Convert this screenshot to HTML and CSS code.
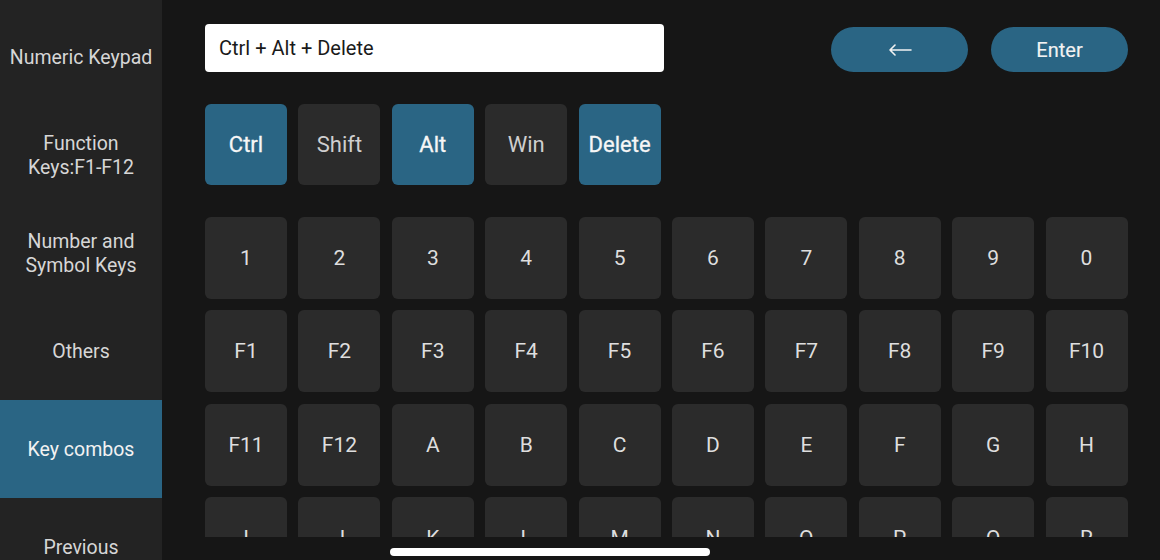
FILE: index.html
```html
<!DOCTYPE html>
<html>
<head>
<meta charset="utf-8">
<link rel="stylesheet" href="styles.css">
</head>
<body>
<div class="app">
  <nav class="sidebar">
    <div class="nav-item">Numeric Keypad</div>
    <div class="nav-item">Function<br>Keys:F1-F12</div>
    <div class="nav-item">Number and<br>Symbol Keys</div>
    <div class="nav-item">Others</div>
    <div class="nav-item active">Key combos</div>
    <div class="nav-item">Previous</div>
  </nav>
  <main class="main">
    <div class="topbar">
      <div class="input">Ctrl + Alt + Delete</div>
      <div class="actions">
        <button class="pill" aria-label="Backspace"><svg class="arrow" width="24" height="12" viewBox="0 0 24 12"><path d="M23 6H2M7 1L2 6l5 5" fill="none" stroke="#f2f2f2" stroke-width="1.6" stroke-linecap="round" stroke-linejoin="round"/></svg></button>
        <button class="pill">Enter</button>
      </div>
    </div>
    <div class="mods">
      <div class="key mod on">Ctrl</div>
      <div class="key mod">Shift</div>
      <div class="key mod on">Alt</div>
      <div class="key mod">Win</div>
      <div class="key mod on">Delete</div>
    </div>
    <div class="grid">
      <div class="key">1</div><div class="key">2</div><div class="key">3</div><div class="key">4</div><div class="key">5</div>
      <div class="key">6</div><div class="key">7</div><div class="key">8</div><div class="key">9</div><div class="key">0</div>
      <div class="key">F1</div><div class="key">F2</div><div class="key">F3</div><div class="key">F4</div><div class="key">F5</div>
      <div class="key">F6</div><div class="key">F7</div><div class="key">F8</div><div class="key">F9</div><div class="key">F10</div>
      <div class="key">F11</div><div class="key">F12</div><div class="key">A</div><div class="key">B</div><div class="key">C</div>
      <div class="key">D</div><div class="key">E</div><div class="key">F</div><div class="key">G</div><div class="key">H</div>
      <div class="key">I</div><div class="key">J</div><div class="key">K</div><div class="key">L</div><div class="key">M</div>
      <div class="key">N</div><div class="key">O</div><div class="key">P</div><div class="key">Q</div><div class="key">R</div>
    </div>
  </main>
  <div class="home-indicator"></div>
</div>
</body>
</html>
```
FILE: styles.css
```css
* { box-sizing: border-box; }
html, body {
  margin: 0;
  padding: 0;
  width: 1160px;
  height: 560px;
  overflow: hidden;
  background: #161616;
  font-family: Roboto, "Noto Sans", sans-serif;
}
.app {
  position: relative;
  display: flex;
  width: 1160px;
  height: 560px;
}
.sidebar {
  width: 162px;
  flex: none;
  background: #232323;
  padding-top: 8px;
  display: flex;
  flex-direction: column;
  overflow: hidden;
}
.nav-item {
  flex: none;
  height: 98px;
  display: flex;
  align-items: center;
  justify-content: center;
  text-align: center;
  color: #d6d6d6;
  font-size: 19.5px;
  line-height: 24px;
  padding-top: 2px;
}
.nav-item.active {
  background: #2a6584;
  color: #f2f2f2;
}
.main {
  flex: 1;
  padding: 24px 32px 0 43px;
  display: flex;
  flex-direction: column;
}
.topbar {
  display: flex;
  align-items: flex-start;
}
.input {
  width: 459px;
  height: 48px;
  background: #ffffff;
  border-radius: 4px;
  color: #1a1a1a;
  font-size: 20px;
  padding-left: 14px;
  display: flex;
  align-items: center;
}
.actions {
  margin-left: auto;
  margin-top: 3px;
  display: flex;
  gap: 23px;
}
.pill {
  width: 137px;
  height: 45px;
  border: none;
  border-radius: 23px;
  background: #2a6584;
  color: #f2f2f2;
  font-family: inherit;
  font-size: 20px;
  padding: 0;
  display: flex;
  align-items: center;
  justify-content: center;
  -webkit-text-stroke: 0.15px #f2f2f2;
}
.arrow {
  display: block;
}
.mods {
  margin-top: 32px;
  display: flex;
  gap: 11.4px;
}
.key {
  background: #2b2b2b;
  border-radius: 6px;
  color: #dedede;
  font-size: 21px;
  display: flex;
  align-items: center;
  justify-content: center;
  height: 82px;
}
.mod {
  width: 82px;
  height: 81px;
  color: #cfcfcf;
  font-size: 22px;
}
.mod.on {
  background: #2a6584;
  color: #f6f6f6;
  -webkit-text-stroke: 0.3px #f6f6f6;
}
.grid {
  margin-top: 32px;
  height: 320px;
  overflow: hidden;
  display: grid;
  grid-template-columns: repeat(10, 82px);
  grid-auto-rows: 82px;
  column-gap: 11.4px;
  row-gap: 11.3px;
}
.home-indicator {
  position: absolute;
  left: 390px;
  top: 548px;
  width: 320px;
  height: 8px;
  border-radius: 4px;
  background: #ffffff;
}
```
